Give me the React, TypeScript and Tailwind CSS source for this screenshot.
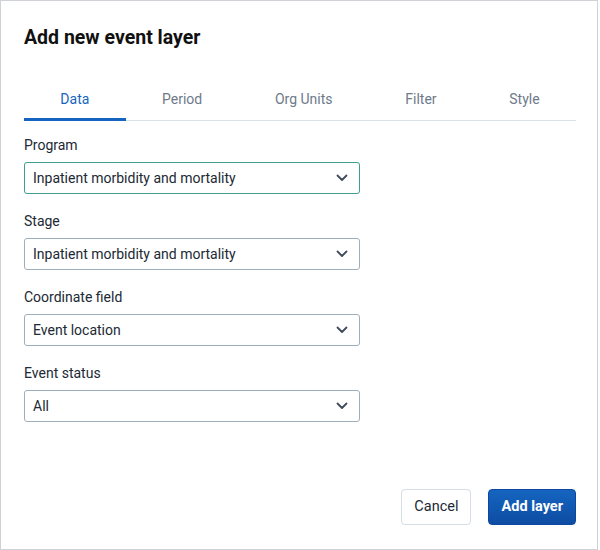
import React, { useState } from 'react';

const tabs = ['Data', 'Period', 'Org Units', 'Filter', 'Style'];

const fields = [
  { label: 'Program', value: 'Inpatient morbidity and mortality', focused: true },
  { label: 'Stage', value: 'Inpatient morbidity and mortality' },
  { label: 'Coordinate field', value: 'Event location' },
  { label: 'Event status', value: 'All' },
];

const Chevron = () => (
  <svg width="12" height="8" viewBox="0 0 12 8" fill="none">
    <path d="M1.5 1.5 6 6l4.5-4.5" stroke="#404b5a" strokeWidth="1.8" strokeLinecap="round" strokeLinejoin="round" />
  </svg>
);

export default function App() {
  const [active, setActive] = useState(0);

  return (
    <div
      className="w-[598px] h-[550px] bg-white border border-[#cfd2d6] flex flex-col pl-[23px] pr-[21px] pt-[23px] pb-[24px] text-[#212934]"
      style={{ fontFamily: 'Roboto, "Liberation Sans", sans-serif' }}
    >
      {/* Header */}
      <h2 className="text-[19.5px] leading-7 font-bold text-[#111]">Add new event layer</h2>

      {/* Tabs */}
      <div className="mt-[27px] flex border-b border-[#dbe1e8]">
        {tabs.map((t, i) => (
          <button
            key={t}
            onClick={() => setActive(i)}
            className={
              'flex-auto px-8 pt-[2px] h-[42px] -mb-px whitespace-nowrap text-[14px] border-b-[3px] ' +
              (i === active ? 'border-[#1565c0] text-[#1565c0]' : 'border-transparent text-[#6e7a8a]')
            }
          >
            {t}
          </button>
        ))}
      </div>

      {/* Fields */}
      <div className="mt-[14px] flex flex-col gap-[17px]">
        {fields.map((f) => (
          <div key={f.label}>
            <label className="block text-[14px] leading-5 text-[#212934] mb-[7px]">{f.label}</label>
            <div
              className={
                'w-[336px] h-[32px] rounded-[3px] border flex items-center justify-between pl-[8px] pr-[11px] text-[14px] ' +
                (f.focused ? 'border-[#3d9e8e]' : 'border-[#a0adba]')
              }
            >
              <span>{f.value}</span>
              <Chevron />
            </div>
          </div>
        ))}
      </div>

      {/* Footer */}
      <div className="mt-auto flex justify-end gap-[17px]">
        <button className="h-[36px] px-[12px] rounded-[4px] border border-[#d5dde5] bg-white text-[14.5px] text-[#212934]">
          Cancel
        </button>
        <button className="h-[36px] px-[12px] rounded-[4px] border border-[#0d47a1] bg-gradient-to-b from-[#1565c0] to-[#0e4ca3] text-[14.5px] font-bold text-white">
          Add layer
        </button>
      </div>
    </div>
  );
}
